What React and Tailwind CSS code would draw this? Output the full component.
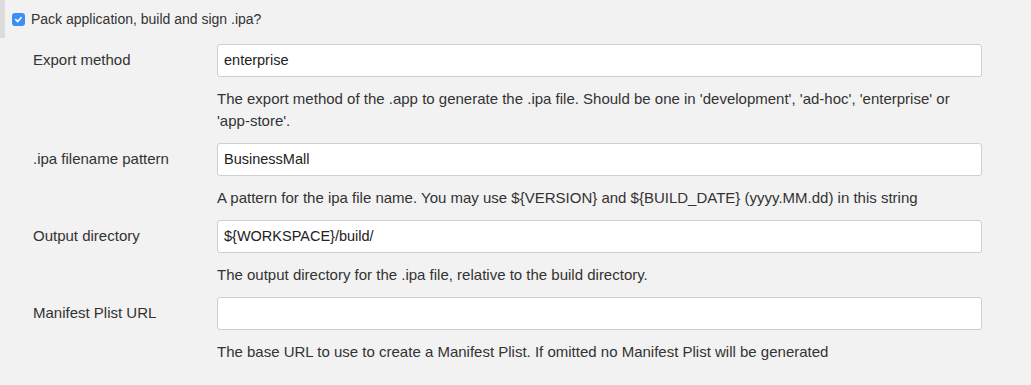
import React from "react";

const rows = [
  {
    label: "Export method",
    value: "enterprise",
    desc: "The export method of the .app to generate the .ipa file. Should be one in 'development', 'ad-hoc', 'enterprise' or 'app-store'.",
  },
  {
    label: ".ipa filename pattern",
    value: "BusinessMall",
    desc: "A pattern for the ipa file name. You may use ${VERSION} and ${BUILD_DATE} (yyyy.MM.dd) in this string",
  },
  {
    label: "Output directory",
    value: "${WORKSPACE}/build/",
    desc: "The output directory for the .ipa file, relative to the build directory.",
  },
  {
    label: "Manifest Plist URL",
    value: "",
    desc: "The base URL to use to create a Manifest Plist. If omitted no Manifest Plist will be generated",
  },
];

export default function App() {
  return (
    <div
      className="w-[1031px] h-[385px] overflow-hidden bg-[#f2f2f2] text-[#333] text-[15px]"
      style={{ fontFamily: '"Liberation Sans", Arial, Helvetica, sans-serif' }}
    >
      <div className="flex items-stretch h-[38px]">
        <div className="w-[5px] bg-[#dcdcdc]" />
        <div className="flex items-center pl-[7px] text-[14px]">
          <span className="w-[13px] h-[13px] rounded-[3px] bg-[#3d8ef5] flex items-center justify-center">
            <svg width="9" height="9" viewBox="0 0 10 10">
              <path d="M2 5.2 L4.2 7.3 L8 2.8" fill="none" stroke="white" strokeWidth="1.8" strokeLinecap="round" strokeLinejoin="round" />
            </svg>
          </span>
          <span className="ml-[6px]">Pack application, build and sign .ipa?</span>
        </div>
      </div>
      <div className="pt-[6px]">
        {rows.map((r) => (
          <div key={r.label} className="grid grid-cols-[217px_765px]">
            <div className="pl-[33px] h-[33px] flex items-center">{r.label}</div>
            <div className="h-[33px] bg-white border border-[#cfcfcf] rounded-[3px] flex items-center pl-[6px] text-[14.5px] text-[#222]">
              {r.value}
            </div>
            <div />
            <div className="pt-[11px] pb-[11px] leading-[22px]">{r.desc}</div>
          </div>
        ))}
      </div>
    </div>
  );
}
